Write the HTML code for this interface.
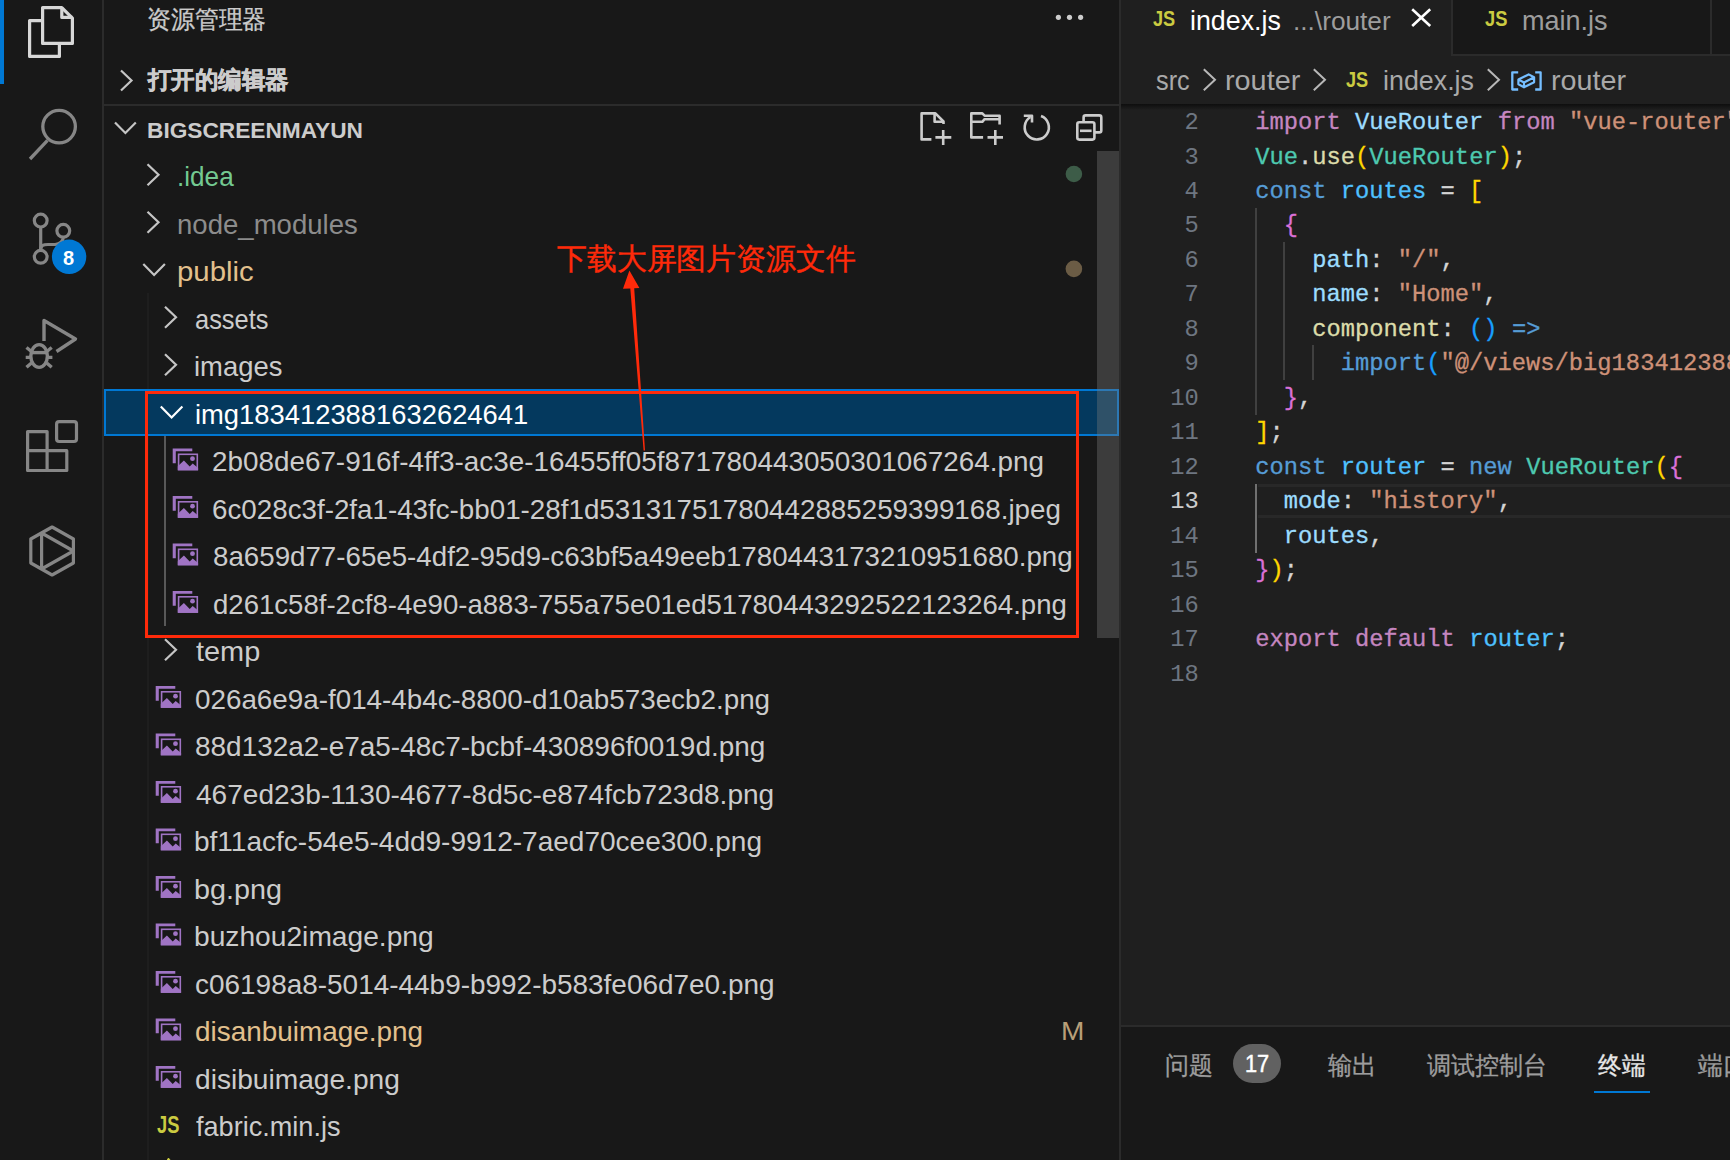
<!DOCTYPE html>
<html><head><meta charset="utf-8"><style>
html,body{margin:0;padding:0;width:1730px;height:1160px;overflow:hidden;background:#181818}
.t{position:absolute;white-space:pre;transform-origin:0 0}
.r{position:absolute;display:block}
</style></head><body>
<div class="r" style="left:0px;top:0px;width:1730px;height:1160px;background:#181818;"></div>
<div class="r" style="left:1121px;top:0px;width:609px;height:1025px;background:#1f1f1f;"></div>
<div class="r" style="left:102px;top:0px;width:2px;height:1160px;background:#2b2b2b;"></div>
<div class="r" style="left:1119px;top:0px;width:2px;height:1160px;background:#2b2b2b;"></div>
<div class="r" style="left:104px;top:104px;width:1015px;height:2px;background:#2b2b2b;"></div>
<div class="r" style="left:0px;top:0px;width:4px;height:84px;background:#0078d4;"></div>
<svg class="r" style="left:0px;top:0px;" width="102" height="600" viewBox="0 0 102 600" fill="none">
<g stroke="#d7d7d7" stroke-width="3.2" stroke-linejoin="round" stroke-linecap="butt">
<path d="M42.6,7.6 H61.8 L72.4,18.2 V43.4 H42.6 Z"/>
<path d="M61.8,7.6 V17.4 H72.4"/>
<path d="M42.6,20.6 H29.6 V56.4 H59.4 V43.4"/>
</g>
<g stroke="#868686" stroke-width="3.3" stroke-linecap="butt">
<circle cx="59.1" cy="126.6" r="16.3"/>
<path d="M47.5,140.3 L30,159"/>
</g>
<g stroke="#868686" stroke-width="3.2">
<circle cx="40.7" cy="220.6" r="6.4"/>
<circle cx="63.3" cy="230.8" r="6.4"/>
<circle cx="40.7" cy="256.8" r="6.4"/>
<path d="M40.7,227 V250.4"/>
<path d="M40.7,250 C40.7,245 43.5,244.5 48,244.5 H55 C60,244.5 63.3,241 63.3,237.2"/>
</g>
<circle cx="69.1" cy="256.8" r="17.2" fill="#0078d4"/>
<g stroke="#868686" stroke-width="3.4" stroke-linejoin="miter">
<path d="M44,341 V320.5 L75.5,339 L56.5,351.5" stroke-linejoin="round"/>
<ellipse cx="39.1" cy="356" rx="8.3" ry="11.4"/>
<path d="M31,352.6 H47.5"/>
<path d="M25.7,357.4 H30 M48,357.4 H52.4 M26.5,347.5 L31.5,351.5 M51.7,347.5 L46.7,351.5 M26.5,367.3 L31.5,363 M51.7,367.3 L46.7,363"/>
</g>
<g stroke="#868686" stroke-width="3.2" stroke-linejoin="round">
<path d="M27.6,431.6 H47.1 V450.7 H66.8 V470.5 H27.6 Z"/>
<path d="M27.6,450.7 H47.1 V470.5"/>
<rect x="56.6" y="421.6" width="19.9" height="19.9" rx="2.5"/>
</g>
<g stroke="#868686" stroke-width="3.2" stroke-linejoin="round">
<path d="M52.1,527 L73.4,539 V563 L52.1,575 L30.8,563 V539 Z"/>
<path d="M41.6,532 V570 M41.6,533 L73.4,551 L41.6,569"/>
</g>
</svg>
<div class="t" style="left:63px;top:248.00px;font-size:20px;line-height:20px;color:#ffffff;font-weight:700;font-family:'Liberation Sans', sans-serif;">8</div>
<div class="t" style="left:146.82752016129032px;top:7.25px;font-size:25px;line-height:25px;color:#cccccc;font-weight:400;font-family:'Liberation Sans', sans-serif;transform:scaleX(0.9548);-webkit-text-stroke:0.3px #cccccc;">资源管理器</div>
<svg class="r" style="left:1040px;top:0px;" width="60" height="40" viewBox="1040 0 60 40" fill="none"><circle cx="1058.4" cy="17.3" r="2.6" fill="#cccccc"/><circle cx="1069.5" cy="17.3" r="2.6" fill="#cccccc"/><circle cx="1080.6" cy="17.3" r="2.6" fill="#cccccc"/></svg>
<svg class="r" style="left:110px;top:60px;" width="30" height="40" viewBox="110 60 30 40" fill="none"><path d="M121,70.5 L131.5,80.5 L121,90.5" stroke="#c5c5c5" stroke-width="2.2"/></svg>
<div class="t" style="left:147.79057112068966px;top:67.60px;font-size:24px;line-height:24px;color:#cccccc;font-weight:700;font-family:'Liberation Sans', sans-serif;transform:scaleX(0.9759);-webkit-text-stroke:0.5px #cccccc;">打开的编辑器</div>
<svg class="r" style="left:110px;top:115px;" width="35" height="25" viewBox="110 115 35 25" fill="none"><path d="M115,122.5 L125.4,133 L135.8,122.5" stroke="#c5c5c5" stroke-width="2.2"/></svg>
<div class="t" style="left:146.78125px;top:120.30px;font-size:22px;line-height:22px;color:#cccccc;font-weight:700;font-family:'Liberation Sans', sans-serif;transform:scaleX(1.0308);">BIGSCREENMAYUN</div>
<svg class="r" style="left:900px;top:100px;" width="220" height="50" viewBox="900 100 220 50" fill="none">
<g stroke="#cccccc" stroke-width="2.6" stroke-linejoin="round">
<path d="M931.4,139.4 H921.6 V113.4 H935.4 L943.5,121.5 V124.1"/>
<path d="M934.6,113.4 V121.8 H943.5"/>
<path d="M935.4,137.4 H951.3 M943.2,129.9 V144.9"/>
<path d="M983.1,137.4 H971.3 V113.4 H982.3 L984.6,115.7 H999.6 V124.4"/>
<path d="M971.3,121.8 H982.3 L984.6,119.2 H999.6"/>
<path d="M987.5,137.4 H1003 M995.3,129.9 V144.9"/>
<path d="M1030.5,117 A12.1,12.1 0 1 0 1041,116" stroke-linecap="butt"/>
<path d="M1023.8,115.7 H1032 V122.6"/>
<rect x="1077.3" y="122.3" width="17.1" height="17.3" rx="2"/>
<path d="M1083.6,122.3 V117.4 Q1083.6,115.4 1085.6,115.4 H1099.3 Q1101.3,115.4 1101.3,117.4 V130.4 Q1101.3,132.4 1099.3,132.4 H1094.4"/>
<path d="M1080,130.8 H1091.6"/>
</g>
</svg>
<div class="r" style="left:147px;top:293px;width:1.5px;height:867px;background:#1e1e1e;"></div>
<div class="r" style="left:164px;top:436px;width:2px;height:190px;background:#585858;"></div>
<div class="r" style="left:104px;top:389px;width:1015px;height:47px;background:#04395e;box-sizing:border-box;border:2px solid #0078d4;"></div>
<svg class="r" style="left:104px;top:140px;" width="100" height="1020" viewBox="104 140 100 1020" fill="none"><path d="M147.5,164.3 L158.5,174.8 L147.5,185.3" stroke="#c5c5c5" stroke-width="2.2"/><path d="M147.5,211.8 L158.5,222.3 L147.5,232.8" stroke="#c5c5c5" stroke-width="2.2"/><path d="M143.3,263.9 L154.10000000000002,274.9 L164.9,263.9" stroke="#c5c5c5" stroke-width="2.2"/><path d="M165,306.8 L176,317.3 L165,327.8" stroke="#c5c5c5" stroke-width="2.2"/><path d="M165,354.3 L176,364.8 L165,375.3" stroke="#c5c5c5" stroke-width="2.2"/><path d="M160.8,406.4 L171.60000000000002,417.4 L182.4,406.4" stroke="#ffffff" stroke-width="2.2"/><path d="M165,639.3 L176,649.8 L165,660.3" stroke="#c5c5c5" stroke-width="2.2"/></svg>
<div class="t" style="left:177.1px;top:163.20px;font-size:28px;line-height:28px;color:#73c991;font-weight:400;font-family:'Liberation Sans', sans-serif;transform:scaleX(0.9333);">.idea</div>
<div class="t" style="left:177.4128756830601px;top:210.70px;font-size:28px;line-height:28px;color:#8c8c8c;font-weight:400;font-family:'Liberation Sans', sans-serif;transform:scaleX(0.9842);">node_modules</div>
<div class="t" style="left:176.72066461267607px;top:258.20px;font-size:28px;line-height:28px;color:#e2c08d;font-weight:400;font-family:'Liberation Sans', sans-serif;transform:scaleX(1.0493);">public</div>
<div class="t" style="left:194.8563671875px;top:305.70px;font-size:28px;line-height:28px;color:#cccccc;font-weight:400;font-family:'Liberation Sans', sans-serif;transform:scaleX(0.9075);">assets</div>
<div class="t" style="left:193.83435744382024px;top:353.20px;font-size:28px;line-height:28px;color:#cccccc;font-weight:400;font-family:'Liberation Sans', sans-serif;transform:scaleX(0.9787);">images</div>
<div class="t" style="left:194.83655512536873px;top:400.70px;font-size:28px;line-height:28px;color:#ffffff;font-weight:400;font-family:'Liberation Sans', sans-serif;transform:scaleX(0.9773);">img1834123881632624641</div>
<div class="t" style="left:212.005748502994px;top:448.20px;font-size:28px;line-height:28px;color:#cccccc;font-weight:400;font-family:'Liberation Sans', sans-serif;transform:scaleX(0.9943);">2b08de67-916f-4ff3-ac3e-16455ff05f871780443050301067264.png</div>
<div class="t" style="left:212.00866510538643px;top:495.70px;font-size:28px;line-height:28px;color:#cccccc;font-weight:400;font-family:'Liberation Sans', sans-serif;transform:scaleX(0.9913);">6c028c3f-2fa1-43fc-bb01-28f1d53131751780442885259399168.jpeg</div>
<div class="t" style="left:213.0px;top:543.20px;font-size:28px;line-height:28px;color:#cccccc;font-weight:400;font-family:'Liberation Sans', sans-serif;transform:scaleX(0.9894);">8a659d77-65e5-4df2-95d9-c63bf5a49eeb1780443173210951680.png</div>
<div class="t" style="left:213.0px;top:590.70px;font-size:28px;line-height:28px;color:#cccccc;font-weight:400;font-family:'Liberation Sans', sans-serif;transform:scaleX(0.9845);">d261c58f-2cf8-4e90-a883-755a75e01ed51780443292522123264.png</div>
<div class="t" style="left:195.81260080645163px;top:638.20px;font-size:28px;line-height:28px;color:#cccccc;font-weight:400;font-family:'Liberation Sans', sans-serif;transform:scaleX(1.0323);">temp</div>
<div class="t" style="left:194.80432255622839px;top:685.70px;font-size:28px;line-height:28px;color:#cccccc;font-weight:400;font-family:'Liberation Sans', sans-serif;transform:scaleX(0.9929);">026a6e9a-f014-4b4c-8800-d10ab573ecb2.png</div>
<div class="t" style="left:194.8010690789474px;top:733.20px;font-size:28px;line-height:28px;color:#cccccc;font-weight:400;font-family:'Liberation Sans', sans-serif;transform:scaleX(0.9982);">88d132a2-e7a5-48c7-bcbf-430896f0019d.png</div>
<div class="t" style="left:195.80074469237437px;top:780.70px;font-size:28px;line-height:28px;color:#cccccc;font-weight:400;font-family:'Liberation Sans', sans-serif;transform:scaleX(1.0019);">467ed23b-1130-4677-8d5c-e874fcb723d8.png</div>
<div class="t" style="left:193.7991454646018px;top:828.20px;font-size:28px;line-height:28px;color:#cccccc;font-weight:400;font-family:'Liberation Sans', sans-serif;transform:scaleX(1.0005);">bf11acfc-54e5-4dd9-9912-7aed70cee300.png</div>
<div class="t" style="left:194.36362951807226px;top:875.70px;font-size:28px;line-height:28px;color:#cccccc;font-weight:400;font-family:'Liberation Sans', sans-serif;transform:scaleX(1.0277);">bg.png</div>
<div class="t" style="left:194.39165783898304px;top:923.20px;font-size:28px;line-height:28px;color:#cccccc;font-weight:400;font-family:'Liberation Sans', sans-serif;transform:scaleX(1.0064);">buzhou2image.png</div>
<div class="t" style="left:195.40064766839376px;top:970.70px;font-size:28px;line-height:28px;color:#cccccc;font-weight:400;font-family:'Liberation Sans', sans-serif;transform:scaleX(0.9979);">c06198a8-5014-44b9-b992-b583fe06d7e0.png</div>
<div class="t" style="left:195.40109649122806px;top:1018.20px;font-size:28px;line-height:28px;color:#e2c08d;font-weight:400;font-family:'Liberation Sans', sans-serif;transform:scaleX(0.9965);">disanbuimage.png</div>
<div class="t" style="left:195.39861453201968px;top:1065.70px;font-size:28px;line-height:28px;color:#cccccc;font-weight:400;font-family:'Liberation Sans', sans-serif;transform:scaleX(1.0044);">disibuimage.png</div>
<div class="t" style="left:196.37754166666664px;top:1113.20px;font-size:28px;line-height:28px;color:#cccccc;font-weight:400;font-family:'Liberation Sans', sans-serif;transform:scaleX(0.9673);">fabric.min.js</div>
<svg class="r" style="left:104px;top:140px;" width="200" height="1020" viewBox="104 140 200 1020" fill="none"><path d="M172.7,463.2 V448.5 H192.3 V451.3 H175.8 V463.2 Z" fill="#a074c4"/><rect x="178.6" y="454.3" width="18.7" height="15.3" stroke="#a074c4" stroke-width="1.6"/><path d="M177.8,466.3 L183.9,460.6 L189.7,466.5 L192.7,463.5 L198.1,468.0 V470.3 H177.8 Z" fill="#a074c4"/><circle cx="192.5" cy="458.7" r="2.4" fill="#a074c4"/><path d="M172.7,510.7 V496.0 H192.3 V498.8 H175.8 V510.7 Z" fill="#a074c4"/><rect x="178.6" y="501.8" width="18.7" height="15.3" stroke="#a074c4" stroke-width="1.6"/><path d="M177.8,513.8 L183.9,508.1 L189.7,514.0 L192.7,511.0 L198.1,515.5 V517.8 H177.8 Z" fill="#a074c4"/><circle cx="192.5" cy="506.2" r="2.4" fill="#a074c4"/><path d="M172.7,558.2 V543.5 H192.3 V546.3 H175.8 V558.2 Z" fill="#a074c4"/><rect x="178.6" y="549.3" width="18.7" height="15.3" stroke="#a074c4" stroke-width="1.6"/><path d="M177.8,561.3 L183.9,555.6 L189.7,561.5 L192.7,558.5 L198.1,563.0 V565.3 H177.8 Z" fill="#a074c4"/><circle cx="192.5" cy="553.7" r="2.4" fill="#a074c4"/><path d="M172.7,605.7 V591.0 H192.3 V593.8 H175.8 V605.7 Z" fill="#a074c4"/><rect x="178.6" y="596.8" width="18.7" height="15.3" stroke="#a074c4" stroke-width="1.6"/><path d="M177.8,608.8 L183.9,603.1 L189.7,609.0 L192.7,606.0 L198.1,610.5 V612.8 H177.8 Z" fill="#a074c4"/><circle cx="192.5" cy="601.2" r="2.4" fill="#a074c4"/><path d="M155.7,700.7 V686.0 H175.3 V688.8 H158.8 V700.7 Z" fill="#a074c4"/><rect x="161.6" y="691.8" width="18.7" height="15.3" stroke="#a074c4" stroke-width="1.6"/><path d="M160.8,703.8 L166.9,698.1 L172.7,704.0 L175.7,701.0 L181.1,705.5 V707.8 H160.8 Z" fill="#a074c4"/><circle cx="175.5" cy="696.2" r="2.4" fill="#a074c4"/><path d="M155.7,748.2 V733.5 H175.3 V736.3 H158.8 V748.2 Z" fill="#a074c4"/><rect x="161.6" y="739.3" width="18.7" height="15.3" stroke="#a074c4" stroke-width="1.6"/><path d="M160.8,751.3 L166.9,745.6 L172.7,751.5 L175.7,748.5 L181.1,753.0 V755.3 H160.8 Z" fill="#a074c4"/><circle cx="175.5" cy="743.7" r="2.4" fill="#a074c4"/><path d="M155.7,795.7 V781.0 H175.3 V783.8 H158.8 V795.7 Z" fill="#a074c4"/><rect x="161.6" y="786.8" width="18.7" height="15.3" stroke="#a074c4" stroke-width="1.6"/><path d="M160.8,798.8 L166.9,793.1 L172.7,799.0 L175.7,796.0 L181.1,800.5 V802.8 H160.8 Z" fill="#a074c4"/><circle cx="175.5" cy="791.2" r="2.4" fill="#a074c4"/><path d="M155.7,843.2 V828.5 H175.3 V831.3 H158.8 V843.2 Z" fill="#a074c4"/><rect x="161.6" y="834.3" width="18.7" height="15.3" stroke="#a074c4" stroke-width="1.6"/><path d="M160.8,846.3 L166.9,840.6 L172.7,846.5 L175.7,843.5 L181.1,848.0 V850.3 H160.8 Z" fill="#a074c4"/><circle cx="175.5" cy="838.7" r="2.4" fill="#a074c4"/><path d="M155.7,890.7 V876.0 H175.3 V878.8 H158.8 V890.7 Z" fill="#a074c4"/><rect x="161.6" y="881.8" width="18.7" height="15.3" stroke="#a074c4" stroke-width="1.6"/><path d="M160.8,893.8 L166.9,888.1 L172.7,894.0 L175.7,891.0 L181.1,895.5 V897.8 H160.8 Z" fill="#a074c4"/><circle cx="175.5" cy="886.2" r="2.4" fill="#a074c4"/><path d="M155.7,938.2 V923.5 H175.3 V926.3 H158.8 V938.2 Z" fill="#a074c4"/><rect x="161.6" y="929.3" width="18.7" height="15.3" stroke="#a074c4" stroke-width="1.6"/><path d="M160.8,941.3 L166.9,935.6 L172.7,941.5 L175.7,938.5 L181.1,943.0 V945.3 H160.8 Z" fill="#a074c4"/><circle cx="175.5" cy="933.7" r="2.4" fill="#a074c4"/><path d="M155.7,985.7 V971.0 H175.3 V973.8 H158.8 V985.7 Z" fill="#a074c4"/><rect x="161.6" y="976.8" width="18.7" height="15.3" stroke="#a074c4" stroke-width="1.6"/><path d="M160.8,988.8 L166.9,983.1 L172.7,989.0 L175.7,986.0 L181.1,990.5 V992.8 H160.8 Z" fill="#a074c4"/><circle cx="175.5" cy="981.2" r="2.4" fill="#a074c4"/><path d="M155.7,1033.2 V1018.5 H175.3 V1021.3 H158.8 V1033.2 Z" fill="#a074c4"/><rect x="161.6" y="1024.3" width="18.7" height="15.3" stroke="#a074c4" stroke-width="1.6"/><path d="M160.8,1036.3 L166.9,1030.6 L172.7,1036.5 L175.7,1033.5 L181.1,1038.0 V1040.3 H160.8 Z" fill="#a074c4"/><circle cx="175.5" cy="1028.7" r="2.4" fill="#a074c4"/><path d="M155.7,1080.7 V1066.0 H175.3 V1068.8 H158.8 V1080.7 Z" fill="#a074c4"/><rect x="161.6" y="1071.8" width="18.7" height="15.3" stroke="#a074c4" stroke-width="1.6"/><path d="M160.8,1083.8 L166.9,1078.1 L172.7,1084.0 L175.7,1081.0 L181.1,1085.5 V1087.8 H160.8 Z" fill="#a074c4"/><circle cx="175.5" cy="1076.2" r="2.4" fill="#a074c4"/></svg>
<div class="t" style="left:157.36183035714282px;top:1113.75px;font-size:23px;line-height:23px;color:#cbcb41;font-weight:700;font-family:'Liberation Sans', sans-serif;transform:scaleX(0.7964);">JS</div>
<svg class="r" style="left:1050px;top:150px;" width="50" height="140" viewBox="1050 150 50 140" fill="none"><circle cx="1073.9" cy="174" r="8.3" fill="#3d5c48"/><circle cx="1073.9" cy="268.9" r="8.3" fill="#6b5c45"/></svg>
<div class="t" style="left:1061.0889802631577px;top:1018.20px;font-size:26px;line-height:26px;color:#b89f78;font-weight:400;font-family:'Liberation Sans', sans-serif;transform:scaleX(1.0789);">M</div>
<div class="r" style="left:1097px;top:151px;width:22px;height:487px;background:rgba(121,121,121,0.37);"></div>
<div class="r" style="left:145px;top:391px;width:934px;height:247px;background:transparent;box-sizing:border-box;border:3px solid #ff2a0a;"></div>
<div class="t" style="left:557.3990625000001px;top:243.50px;font-size:30px;line-height:30px;color:#ff2a0a;font-weight:400;font-family:'Liberation Sans', sans-serif;transform:scaleX(0.9950);-webkit-text-stroke:0.4px #ff2a0a;">下载大屏图片资源文件</div>
<svg class="r" style="left:600px;top:260px;" width="60" height="200" viewBox="600 260 60 200" fill="none"><path d="M629.4,270.6 L639.4,288 L634.2,288.3 L645,450.5 L643.6,450.5 L630.3,288.6 L623,288.7 Z" fill="#ff2a0a"/></svg>
<div class="r" style="left:1121px;top:0px;width:609px;height:54px;background:#181818;"></div>
<div class="r" style="left:1121px;top:54px;width:609px;height:2px;background:#2b2b2b;"></div>
<div class="r" style="left:1121px;top:0px;width:330px;height:56px;background:#1f1f1f;"></div>
<div class="r" style="left:1451px;top:0px;width:2px;height:56px;background:#2b2b2b;"></div>
<div class="r" style="left:1710px;top:0px;width:2px;height:56px;background:#2b2b2b;"></div>
<div class="t" style="left:1152.732002314815px;top:7.60px;font-size:22px;line-height:22px;color:#cbcb41;font-weight:700;font-family:'Liberation Sans', sans-serif;transform:scaleX(0.8259);">JS</div>
<div class="t" style="left:1189.8472074468086px;top:6.50px;font-size:28px;line-height:28px;color:#ffffff;font-weight:400;font-family:'Liberation Sans', sans-serif;transform:scaleX(0.9574);">index.js</div>
<div class="t" style="left:1292.901098901099px;top:9.05px;font-size:25px;line-height:25px;color:#9d9d9d;font-weight:400;font-family:'Liberation Sans', sans-serif;transform:scaleX(1.0495);">...\router</div>
<svg class="r" style="left:1400px;top:0px;" width="40" height="40" viewBox="1400 0 40 40" fill="none"><path d="M1412.2,9.3 L1430.2,26 M1430.2,9.3 L1412.2,26" stroke="#ffffff" stroke-width="2.6"/></svg>
<div class="t" style="left:1485.0px;top:7.60px;font-size:22px;line-height:22px;color:#cbcb41;font-weight:700;font-family:'Liberation Sans', sans-serif;transform:scaleX(0.8333);">JS</div>
<div class="t" style="left:1522.24849137931px;top:6.50px;font-size:28px;line-height:28px;color:#9d9d9d;font-weight:400;font-family:'Liberation Sans', sans-serif;transform:scaleX(0.9655);">main.js</div>
<div class="t" style="left:1156.0486486486486px;top:67.20px;font-size:28px;line-height:28px;color:#a9a9a9;font-weight:400;font-family:'Liberation Sans', sans-serif;transform:scaleX(0.9027);">src</div>
<div class="t" style="left:1224.7676432291669px;top:67.20px;font-size:28px;line-height:28px;color:#a9a9a9;font-weight:400;font-family:'Liberation Sans', sans-serif;transform:scaleX(1.0292);">router</div>
<div class="t" style="left:1346.0966435185182px;top:69.30px;font-size:22px;line-height:22px;color:#cbcb41;font-weight:700;font-family:'Liberation Sans', sans-serif;transform:scaleX(0.8259);">JS</div>
<div class="t" style="left:1383.0414893617021px;top:67.20px;font-size:28px;line-height:28px;color:#a9a9a9;font-weight:400;font-family:'Liberation Sans', sans-serif;transform:scaleX(0.9585);">index.js</div>
<div class="t" style="left:1550.975px;top:67.20px;font-size:28px;line-height:28px;color:#a9a9a9;font-weight:400;font-family:'Liberation Sans', sans-serif;transform:scaleX(1.0250);">router</div>
<svg class="r" style="left:1190px;top:60px;" width="360" height="40" viewBox="1190 60 360 40" fill="none"><path d="M1203.8,69.3 L1215.0,79.8 L1203.8,90.3" stroke="#b8b8b8" stroke-width="2"/><path d="M1313.8,69.3 L1325.0,79.8 L1313.8,90.3" stroke="#b8b8b8" stroke-width="2"/><path d="M1487.8,69.3 L1499.0,79.8 L1487.8,90.3" stroke="#b8b8b8" stroke-width="2"/><path d="M1518.2,72.3 H1512.3 V89.5 H1518.2 M1535.2,72.3 H1540.6 V89.5 H1535.2" stroke="#75beff" stroke-width="2.3" stroke-linejoin="round"/><path d="M1518.4,79.6 L1528.6,74.4 L1534.1,77.3 V82.3 L1524,87.3 L1518.4,84.3 Z M1518.4,79.6 L1524,82.4 L1534.1,77.3 M1524,82.4 V87.3" stroke="#75beff" stroke-width="2.2" stroke-linejoin="round"/></svg>
<div class="r" style="left:1258px;top:484px;width:472px;height:34px;background:transparent;box-sizing:border-box;border-top:3px solid #282828;border-bottom:3px solid #282828;"></div>
<div class="r" style="left:1254.8px;top:207.5px;width:2px;height:207px;background:#404040;"></div>
<div class="r" style="left:1283.3px;top:241.5px;width:2px;height:138px;background:#404040;"></div>
<div class="r" style="left:1311.8px;top:345px;width:2px;height:35px;background:#404040;"></div>
<div class="r" style="left:1254.8px;top:483.5px;width:2.5px;height:69px;background:#707070;"></div>
<div class="r" style="left:1121px;top:104px;width:609px;height:6px;background:linear-gradient(#0e0e0e,rgba(31,31,31,0));"></div>
<div class="t" style="left:1184.55px;top:111.05px;font-size:23.75px;line-height:23.75px;color:#6e7681;font-weight:400;font-family:'Liberation Mono', monospace;">2</div>
<div class="t" style="left:1255.3px;top:111.05px;font-size:23.75px;line-height:23.75px;color:#d4d4d4;font-weight:400;font-family:'Liberation Mono', monospace;white-space:pre;-webkit-text-stroke-width:0.3px;"><span style="color:#c586c0">import</span><span style="color:#d4d4d4"> </span><span style="color:#9cdcfe">VueRouter</span><span style="color:#d4d4d4"> </span><span style="color:#c586c0">from</span><span style="color:#d4d4d4"> </span><span style="color:#ce9178">"vue-router"</span><span style="color:#d4d4d4">;</span></div>
<div class="t" style="left:1184.55px;top:145.52px;font-size:23.75px;line-height:23.75px;color:#6e7681;font-weight:400;font-family:'Liberation Mono', monospace;">3</div>
<div class="t" style="left:1255.3px;top:145.52px;font-size:23.75px;line-height:23.75px;color:#d4d4d4;font-weight:400;font-family:'Liberation Mono', monospace;white-space:pre;-webkit-text-stroke-width:0.3px;"><span style="color:#4ec9b0">Vue</span><span style="color:#d4d4d4">.</span><span style="color:#dcdcaa">use</span><span style="color:#ffd700">(</span><span style="color:#4ec9b0">VueRouter</span><span style="color:#ffd700">)</span><span style="color:#d4d4d4">;</span></div>
<div class="t" style="left:1184.55px;top:179.99px;font-size:23.75px;line-height:23.75px;color:#6e7681;font-weight:400;font-family:'Liberation Mono', monospace;">4</div>
<div class="t" style="left:1255.3px;top:179.99px;font-size:23.75px;line-height:23.75px;color:#d4d4d4;font-weight:400;font-family:'Liberation Mono', monospace;white-space:pre;-webkit-text-stroke-width:0.3px;"><span style="color:#569cd6">const</span><span style="color:#d4d4d4"> </span><span style="color:#4fc1ff">routes</span><span style="color:#d4d4d4"> = </span><span style="color:#ffd700">[</span></div>
<div class="t" style="left:1184.55px;top:214.46px;font-size:23.75px;line-height:23.75px;color:#6e7681;font-weight:400;font-family:'Liberation Mono', monospace;">5</div>
<div class="t" style="left:1255.3px;top:214.46px;font-size:23.75px;line-height:23.75px;color:#d4d4d4;font-weight:400;font-family:'Liberation Mono', monospace;white-space:pre;-webkit-text-stroke-width:0.3px;"><span style="color:#d4d4d4">  </span><span style="color:#da70d6">{</span></div>
<div class="t" style="left:1184.55px;top:248.93px;font-size:23.75px;line-height:23.75px;color:#6e7681;font-weight:400;font-family:'Liberation Mono', monospace;">6</div>
<div class="t" style="left:1255.3px;top:248.93px;font-size:23.75px;line-height:23.75px;color:#d4d4d4;font-weight:400;font-family:'Liberation Mono', monospace;white-space:pre;-webkit-text-stroke-width:0.3px;"><span style="color:#d4d4d4">    </span><span style="color:#9cdcfe">path</span><span style="color:#d4d4d4">: </span><span style="color:#ce9178">"/"</span><span style="color:#d4d4d4">,</span></div>
<div class="t" style="left:1184.55px;top:283.40px;font-size:23.75px;line-height:23.75px;color:#6e7681;font-weight:400;font-family:'Liberation Mono', monospace;">7</div>
<div class="t" style="left:1255.3px;top:283.40px;font-size:23.75px;line-height:23.75px;color:#d4d4d4;font-weight:400;font-family:'Liberation Mono', monospace;white-space:pre;-webkit-text-stroke-width:0.3px;"><span style="color:#d4d4d4">    </span><span style="color:#9cdcfe">name</span><span style="color:#d4d4d4">: </span><span style="color:#ce9178">"Home"</span><span style="color:#d4d4d4">,</span></div>
<div class="t" style="left:1184.55px;top:317.87px;font-size:23.75px;line-height:23.75px;color:#6e7681;font-weight:400;font-family:'Liberation Mono', monospace;">8</div>
<div class="t" style="left:1255.3px;top:317.87px;font-size:23.75px;line-height:23.75px;color:#d4d4d4;font-weight:400;font-family:'Liberation Mono', monospace;white-space:pre;-webkit-text-stroke-width:0.3px;"><span style="color:#d4d4d4">    </span><span style="color:#dcdcaa">component</span><span style="color:#d4d4d4">: </span><span style="color:#179fff">()</span><span style="color:#d4d4d4"> </span><span style="color:#569cd6">=&gt;</span></div>
<div class="t" style="left:1184.55px;top:352.34px;font-size:23.75px;line-height:23.75px;color:#6e7681;font-weight:400;font-family:'Liberation Mono', monospace;">9</div>
<div class="t" style="left:1255.3px;top:352.34px;font-size:23.75px;line-height:23.75px;color:#d4d4d4;font-weight:400;font-family:'Liberation Mono', monospace;white-space:pre;-webkit-text-stroke-width:0.3px;"><span style="color:#d4d4d4">      </span><span style="color:#569cd6">import</span><span style="color:#179fff">(</span><span style="color:#ce9178">"@/views/big1834123881632624641/index.vue"</span><span style="color:#179fff">)</span></div>
<div class="t" style="left:1170.3px;top:386.81px;font-size:23.75px;line-height:23.75px;color:#6e7681;font-weight:400;font-family:'Liberation Mono', monospace;">10</div>
<div class="t" style="left:1255.3px;top:386.81px;font-size:23.75px;line-height:23.75px;color:#d4d4d4;font-weight:400;font-family:'Liberation Mono', monospace;white-space:pre;-webkit-text-stroke-width:0.3px;"><span style="color:#d4d4d4">  </span><span style="color:#da70d6">}</span><span style="color:#d4d4d4">,</span></div>
<div class="t" style="left:1170.3px;top:421.28px;font-size:23.75px;line-height:23.75px;color:#6e7681;font-weight:400;font-family:'Liberation Mono', monospace;">11</div>
<div class="t" style="left:1255.3px;top:421.28px;font-size:23.75px;line-height:23.75px;color:#d4d4d4;font-weight:400;font-family:'Liberation Mono', monospace;white-space:pre;-webkit-text-stroke-width:0.3px;"><span style="color:#ffd700">]</span><span style="color:#d4d4d4">;</span></div>
<div class="t" style="left:1170.3px;top:455.75px;font-size:23.75px;line-height:23.75px;color:#6e7681;font-weight:400;font-family:'Liberation Mono', monospace;">12</div>
<div class="t" style="left:1255.3px;top:455.75px;font-size:23.75px;line-height:23.75px;color:#d4d4d4;font-weight:400;font-family:'Liberation Mono', monospace;white-space:pre;-webkit-text-stroke-width:0.3px;"><span style="color:#569cd6">const</span><span style="color:#d4d4d4"> </span><span style="color:#4fc1ff">router</span><span style="color:#d4d4d4"> = </span><span style="color:#569cd6">new</span><span style="color:#d4d4d4"> </span><span style="color:#4ec9b0">VueRouter</span><span style="color:#ffd700">(</span><span style="color:#da70d6">{</span></div>
<div class="t" style="left:1170.3px;top:490.22px;font-size:23.75px;line-height:23.75px;color:#cccccc;font-weight:400;font-family:'Liberation Mono', monospace;">13</div>
<div class="t" style="left:1255.3px;top:490.22px;font-size:23.75px;line-height:23.75px;color:#d4d4d4;font-weight:400;font-family:'Liberation Mono', monospace;white-space:pre;-webkit-text-stroke-width:0.3px;"><span style="color:#d4d4d4">  </span><span style="color:#9cdcfe">mode</span><span style="color:#d4d4d4">: </span><span style="color:#ce9178">"history"</span><span style="color:#d4d4d4">,</span></div>
<div class="t" style="left:1170.3px;top:524.69px;font-size:23.75px;line-height:23.75px;color:#6e7681;font-weight:400;font-family:'Liberation Mono', monospace;">14</div>
<div class="t" style="left:1255.3px;top:524.69px;font-size:23.75px;line-height:23.75px;color:#d4d4d4;font-weight:400;font-family:'Liberation Mono', monospace;white-space:pre;-webkit-text-stroke-width:0.3px;"><span style="color:#d4d4d4">  </span><span style="color:#9cdcfe">routes</span><span style="color:#d4d4d4">,</span></div>
<div class="t" style="left:1170.3px;top:559.16px;font-size:23.75px;line-height:23.75px;color:#6e7681;font-weight:400;font-family:'Liberation Mono', monospace;">15</div>
<div class="t" style="left:1255.3px;top:559.16px;font-size:23.75px;line-height:23.75px;color:#d4d4d4;font-weight:400;font-family:'Liberation Mono', monospace;white-space:pre;-webkit-text-stroke-width:0.3px;"><span style="color:#da70d6">}</span><span style="color:#ffd700">)</span><span style="color:#d4d4d4">;</span></div>
<div class="t" style="left:1170.3px;top:593.63px;font-size:23.75px;line-height:23.75px;color:#6e7681;font-weight:400;font-family:'Liberation Mono', monospace;">16</div>
<div class="t" style="left:1170.3px;top:628.10px;font-size:23.75px;line-height:23.75px;color:#6e7681;font-weight:400;font-family:'Liberation Mono', monospace;">17</div>
<div class="t" style="left:1255.3px;top:628.10px;font-size:23.75px;line-height:23.75px;color:#d4d4d4;font-weight:400;font-family:'Liberation Mono', monospace;white-space:pre;-webkit-text-stroke-width:0.3px;"><span style="color:#c586c0">export</span><span style="color:#d4d4d4"> </span><span style="color:#c586c0">default</span><span style="color:#d4d4d4"> </span><span style="color:#4fc1ff">router</span><span style="color:#d4d4d4">;</span></div>
<div class="t" style="left:1170.3px;top:662.57px;font-size:23.75px;line-height:23.75px;color:#6e7681;font-weight:400;font-family:'Liberation Mono', monospace;">18</div>
<div class="r" style="left:1121px;top:1025px;width:609px;height:2px;background:#2b2b2b;"></div>
<div class="t" style="left:1164.629296875px;top:1052.75px;font-size:25px;line-height:25px;color:#9d9d9d;font-weight:400;font-family:'Liberation Sans', sans-serif;transform:scaleX(0.9583);-webkit-text-stroke:0.3px #9d9d9d;">问题</div>
<div class="r" style="left:1233px;top:1043.9px;width:48px;height:39px;background:#616161;border-radius:19.5px;"></div>
<div class="t" style="left:1244.8562500000003px;top:1052.10px;font-size:24px;line-height:24px;color:#ffffff;font-weight:400;font-family:'Liberation Sans', sans-serif;transform:scaleX(0.9077);-webkit-text-stroke-width:0.5px;">17</div>
<div class="t" style="left:1327.5936835106381px;top:1052.75px;font-size:25px;line-height:25px;color:#9d9d9d;font-weight:400;font-family:'Liberation Sans', sans-serif;transform:scaleX(0.9787);-webkit-text-stroke:0.3px #9d9d9d;">输出</div>
<div class="t" style="left:1427.0px;top:1052.75px;font-size:25px;line-height:25px;color:#9d9d9d;font-weight:400;font-family:'Liberation Sans', sans-serif;transform:scaleX(0.9634);-webkit-text-stroke:0.3px #9d9d9d;">调试控制台</div>
<div class="t" style="left:1597.9735294117647px;top:1052.75px;font-size:25px;line-height:25px;color:#e7e7e7;font-weight:400;font-family:'Liberation Sans', sans-serif;transform:scaleX(0.9471);-webkit-text-stroke:0.3px #e7e7e7;">终端</div>
<div class="t" style="left:1697.8px;top:1052.75px;font-size:25px;line-height:25px;color:#9d9d9d;font-weight:400;font-family:'Liberation Sans', sans-serif;-webkit-text-stroke:0.3px #9d9d9d;">端口</div>
<div class="r" style="left:1594px;top:1091px;width:56px;height:2.3px;background:#0078d4;"></div>
<div class="r" style="left:166.5px;top:1157.5px;width:4px;height:2.5px;background:#cbcb41;clip-path:polygon(50% 0,100% 100%,0 100%);"></div>
</body></html>
